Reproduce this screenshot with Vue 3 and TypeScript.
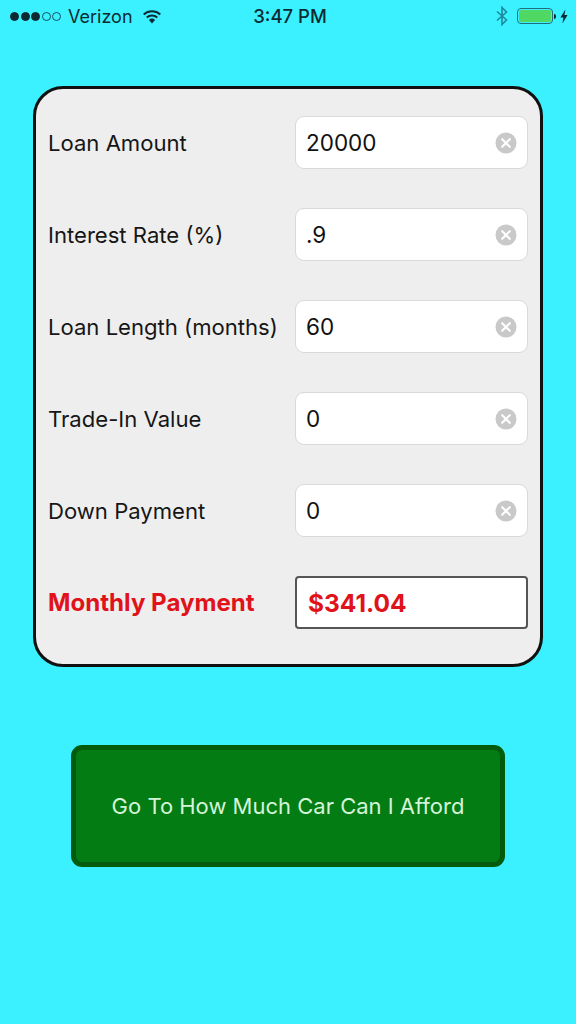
<script setup lang="ts">
interface Row {
  label: string
  value: string
}
const rows: Row[] = [
  { label: 'Loan Amount', value: '20000' },
  { label: 'Interest Rate (%)', value: '.9' },
  { label: 'Loan Length (months)', value: '60' },
  { label: 'Trade-In Value', value: '0' },
  { label: 'Down Payment', value: '0' },
]
</script>

<template>
  <div class="screen">
    <header class="status">
      <div class="status-left">
        <span class="dots">
          <i class="dot on"></i><i class="dot on"></i><i class="dot on"></i><i class="dot"></i><i class="dot"></i>
        </span>
        <span class="carrier">Verizon</span>
        <svg class="wifi" width="20" height="15" viewBox="0 0 20 15">
          <path d="M10 14.5 L6.9 10.9 A4.8 4.8 0 0 1 13.1 10.9 Z" fill="#0d2a33" />
          <path d="M4.7 8.6 A8 8 0 0 1 15.3 8.6" fill="none" stroke="#0d2a33" stroke-width="2" />
          <path d="M1.7 5.4 A12.4 12.4 0 0 1 18.3 5.4" fill="none" stroke="#0d2a33" stroke-width="2" />
        </svg>
      </div>
      <div class="time">3:47 PM</div>
      <div class="status-right">
        <svg class="bt" width="12" height="20" viewBox="0 0 12 20">
          <path d="M1 5.5 L10.5 14 L6 18.5 L6 1.5 L10.5 6 L1 14.5" fill="none" stroke="#1c8a9c" stroke-width="1.6" />
        </svg>
        <span class="battery"><span class="fill"></span></span>
        <span class="nub"></span>
        <svg class="bolt" width="8" height="15" viewBox="0 0 8 14">
          <path d="M5.4 0 L0.4 8 L3.4 8 L2.4 14 L7.6 5.6 L4.4 5.6 Z" fill="#0d2a33" />
        </svg>
      </div>
    </header>

    <section class="card">
      <div v-for="row in rows" :key="row.label" class="row">
        <span class="label">{{ row.label }}</span>
        <div class="field">
          <span class="value">{{ row.value }}</span>
          <svg class="clear" width="22" height="22" viewBox="0 0 22 22">
            <circle cx="11" cy="11" r="10.5" fill="#c9c9c9" />
            <path d="M7.2 7.2 L14.8 14.8 M14.8 7.2 L7.2 14.8" stroke="#fff" stroke-width="2.2" stroke-linecap="round" />
          </svg>
        </div>
      </div>
      <div class="row">
        <span class="label result">Monthly Payment</span>
        <div class="field output">
          <span class="value result">$341.04</span>
        </div>
      </div>
    </section>

    <div class="action">
      <button class="go" type="button">Go To How Much Car Can I Afford</button>
    </div>
  </div>
</template>

<style>
html,
body {
  margin: 0;
  background: #3cf1ff;
}
</style>

<style scoped>
.screen {
  width: 576px;
  height: 1024px;
  background: #3cf1ff;
  font-family: Inter, "Liberation Sans", sans-serif;
  color: #111;
  overflow: hidden;
  box-sizing: border-box;
}
.status {
  height: 34px;
  margin-bottom: 52px;
  display: grid;
  grid-template-columns: 1fr auto 1fr;
  align-items: center;
  padding: 0 8px 2px 10px;
  box-sizing: border-box;
  color: #0d2a33;
  font-size: 18px;
}
.status-left,
.status-right {
  display: flex;
  align-items: center;
}
.status-right {
  justify-content: flex-end;
}
.dots {
  display: flex;
  gap: 1.5px;
}
.dot {
  width: 9px;
  height: 9px;
  border-radius: 50%;
  border: 1px solid #0d2a33;
  box-sizing: border-box;
  opacity: 0.8;
}
.dot.on {
  background: #0d2a33;
  opacity: 1;
}
.carrier {
  margin-left: 7px;
}
.wifi {
  margin-left: 9px;
}
.time {
  font-weight: 500;
  font-size: 18.5px;
  margin-left: 2px;
}
.bt {
  margin-right: 9px;
}
.battery {
  width: 36px;
  height: 16px;
  border: 1px solid #1f6f78;
  border-radius: 4px;
  padding: 1px;
  box-sizing: border-box;
  display: block;
}
.fill {
  display: block;
  height: 100%;
  background: #4fd964;
  border-radius: 2px;
}
.nub {
  width: 2px;
  height: 5px;
  background: #0d2a33;
  margin-left: 1px;
  border-radius: 0 2px 2px 0;
}
.bolt {
  margin-left: 4px;
}
.card {
  width: 510px;
  height: 581px;
  margin-left: 33px;
  box-sizing: border-box;
  background: #eeeeee;
  border: 3px solid #111;
  border-radius: 30px;
  padding: 27px 12px 34px;
  display: flex;
  flex-direction: column;
  gap: 39px;
}
.row {
  display: flex;
  justify-content: space-between;
  align-items: center;
  height: 53px;
}
.label {
  font-size: 22.1px;
  color: #161616;
}
.field {
  width: 233px;
  height: 53px;
  box-sizing: border-box;
  background: #fff;
  border: 1px solid #d9d9d9;
  border-radius: 9px;
  padding: 0 10px;
  display: flex;
  align-items: center;
  justify-content: space-between;
}
.value {
  font-size: 22.5px;
  color: #111;
}
.clear {
  display: block;
}
.output {
  border: 2px solid #555;
  border-radius: 4px;
  padding-left: 11px;
}
.label.result,
.value.result {
  color: #e0131a;
  font-weight: 700;
  font-size: 24.1px;
}
.value.result {
  font-size: 24.5px;
}
.action {
  margin-top: 78px;
  padding-left: 71px;
}
.go {
  width: 434px;
  height: 122px;
  box-sizing: border-box;
  background: #047c14;
  border: 5px solid #035c0e;
  border-radius: 11px;
  color: #d4f4d8;
  font-family: inherit;
  font-size: 22px;
  padding: 0;
}
</style>
